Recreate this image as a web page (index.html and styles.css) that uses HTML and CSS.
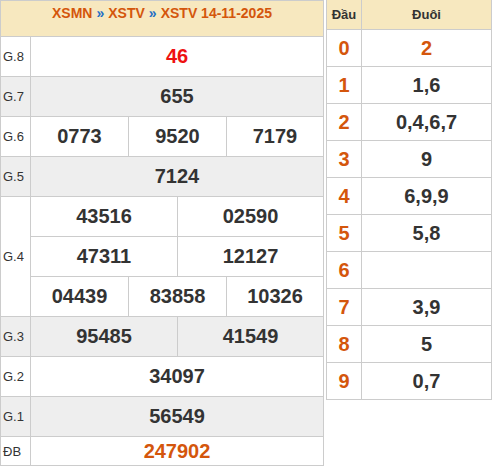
FILE: index.html
```html
<!DOCTYPE html>
<html lang="vi">
<head>
<meta charset="utf-8">
<title>XSTV 14-11-2025</title>
<link rel="stylesheet" href="styles.css">
</head>
<body>
<div class="page">
  <div class="kq">
    <div class="title"><span class="lnk">XSMN</span><span class="sep">»</span><span class="lnk">XSTV</span><span class="sep">»</span><span class="lnk">XSTV 14-11-2025</span></div>

    <div class="lbl">G.8</div>
    <div class="num s6 red">46</div>

    <div class="lbl alt">G.7</div>
    <div class="num s6 alt">655</div>

    <div class="lbl">G.6</div>
    <div class="num s2">0773</div>
    <div class="num s2">9520</div>
    <div class="num s2">7179</div>

    <div class="lbl alt">G.5</div>
    <div class="num s6 alt">7124</div>

    <div class="lbl r3">G.4</div>
    <div class="num s3">43516</div>
    <div class="num s3">02590</div>
    <div class="num s3">47311</div>
    <div class="num s3">12127</div>
    <div class="num s2">04439</div>
    <div class="num s2">83858</div>
    <div class="num s2">10326</div>

    <div class="lbl alt">G.3</div>
    <div class="num s3 alt">95485</div>
    <div class="num s3 alt">41549</div>

    <div class="lbl">G.2</div>
    <div class="num s6">34097</div>

    <div class="lbl alt">G.1</div>
    <div class="num s6 alt">56549</div>

    <div class="lbl">ĐB</div>
    <div class="num s6 db">247902</div>
  </div>

  <div class="loto">
    <div class="lh">Đầu</div>
    <div class="lh">Đuôi</div>
    <div class="hd">0</div><div class="tl hl">2</div>
    <div class="hd">1</div><div class="tl">1,6</div>
    <div class="hd">2</div><div class="tl">0,4,6,7</div>
    <div class="hd">3</div><div class="tl">9</div>
    <div class="hd">4</div><div class="tl">6,9,9</div>
    <div class="hd">5</div><div class="tl">5,8</div>
    <div class="hd">6</div><div class="tl"></div>
    <div class="hd">7</div><div class="tl">3,9</div>
    <div class="hd">8</div><div class="tl">5</div>
    <div class="hd">9</div><div class="tl">0,7</div>
  </div>
</div>
</body>
</html>
```

FILE: styles.css
```css
html, body {
  margin: 0;
  padding: 0;
  background: #ffffff;
}

body {
  font-family: "Liberation Sans", Arial, sans-serif;
  color: #333333;
}

.page {
  display: flex;
  align-items: flex-start;
  gap: 2px;
}

.kq {
  display: grid;
  width: 324px;
  box-sizing: border-box;
  grid-template-columns: 29px 48px 48px 48px 48px 48px 47px;
  grid-template-rows: 35px repeat(10, 39px) 28px;
  gap: 1px;
  padding: 1px;
  background: #cccccc;
}

.title {
  grid-column: 1 / -1;
  background: #f7e8bf;
  display: flex;
  justify-content: center;
  align-items: flex-start;
  padding-top: 4px;
  font-size: 14px;
  line-height: 16px;
  font-weight: bold;
  color: #d4560c;
}

.sep {
  color: #1f6fc5;
  margin: 0 4px;
}

.lbl {
  background: #ffffff;
  display: flex;
  align-items: center;
  padding-left: 2px;
  font-size: 13px;
  color: #333333;
}

.r3 {
  grid-row: span 3;
}

.num {
  background: #ffffff;
  display: flex;
  align-items: center;
  justify-content: center;
  font-size: 20px;
  font-weight: bold;
  color: #333333;
}

.s2 { grid-column: span 2; }
.s3 { grid-column: span 3; }
.s6 { grid-column: span 6; }

.alt {
  background: #eeeeee;
}

.red {
  color: #ee1111;
}

.db {
  color: #d4560c;
}

.loto {
  display: grid;
  width: 166px;
  box-sizing: border-box;
  grid-template-columns: 34px 129px;
  grid-template-rows: 29px repeat(10, 36px);
  gap: 1px;
  padding: 0 1px 1px 1px;
  background: #cccccc;
}

.lh {
  background: #f7e8bf;
  display: flex;
  align-items: center;
  justify-content: center;
  font-size: 13px;
  font-weight: bold;
  color: #333333;
}

.hd {
  background: #ffffff;
  display: flex;
  align-items: center;
  justify-content: center;
  font-size: 20px;
  font-weight: bold;
  color: #d4560c;
}

.tl {
  background: #ffffff;
  display: flex;
  align-items: center;
  justify-content: center;
  font-size: 20px;
  font-weight: bold;
  color: #333333;
}

.hl {
  color: #d4560c;
}
```
